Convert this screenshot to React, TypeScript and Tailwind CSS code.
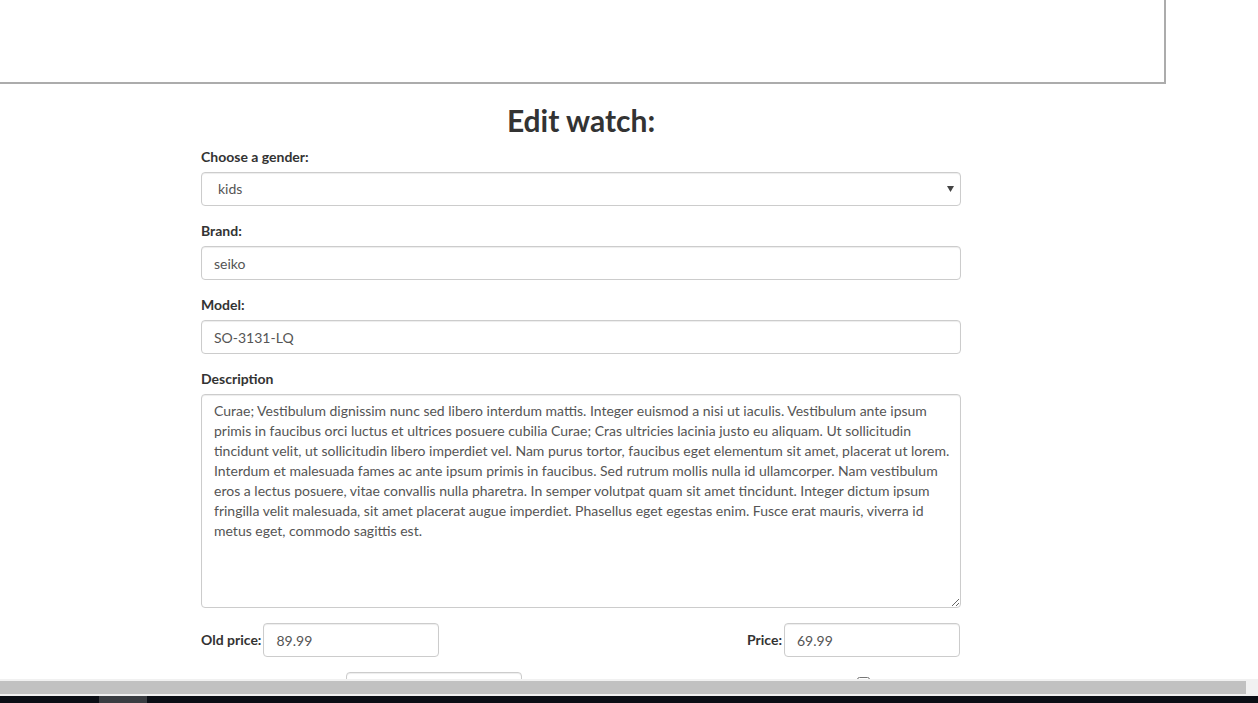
import React from "react";

const descriptionLines = [
  "Curae; Vestibulum dignissim nunc sed libero interdum mattis. Integer euismod a nisi ut iaculis. Vestibulum ante ipsum",
  "primis in faucibus orci luctus et ultrices posuere cubilia Curae; Cras ultricies lacinia justo eu aliquam. Ut sollicitudin",
  "tincidunt velit, ut sollicitudin libero imperdiet vel. Nam purus tortor, faucibus eget elementum sit amet, placerat ut lorem.",
  "Interdum et malesuada fames ac ante ipsum primis in faucibus. Sed rutrum mollis nulla id ullamcorper. Nam vestibulum",
  "eros a lectus posuere, vitae convallis nulla pharetra. In semper volutpat quam sit amet tincidunt. Integer dictum ipsum",
  "fringilla velit malesuada, sit amet placerat augue imperdiet. Phasellus eget egestas enim. Fusce erat mauris, viverra id",
  "metus eget, commodo sagittis est.",
];

const control =
  "h-[34px] rounded-[4px] border border-[#ccc] bg-white px-3 text-[14px] leading-5 text-[#555] shadow-[inset_0_1px_1px_rgba(0,0,0,0.075)] outline-none";

function Field({ label, value }: { label: string; value: string }) {
  return (
    <div className="mb-[15px] flex flex-col">
      <label className="mb-[5px] text-[14px] font-bold leading-5 text-[#333]">{label}</label>
      <input className={`${control} w-full`} defaultValue={value} readOnly />
    </div>
  );
}

export default function App() {
  return (
    <div className="flex h-[703px] w-[1258px] flex-col overflow-hidden bg-white font-['Lato','Open_Sans',sans-serif]">
      <div className="flex-1 overflow-hidden">
        <div className="h-[84px] w-[1166px] border-b-2 border-r-2 border-[#acacac]" />

        <form className="ml-[201px] w-[760px]">
          <h2 className="mb-[10px] mt-[20px] text-center text-[30px] font-bold leading-[33px] text-[#333]">
            Edit watch:
          </h2>

          <div className="mb-[15px] flex flex-col">
            <label className="mb-[5px] text-[14px] font-bold leading-5 text-[#333]">
              Choose a gender:
            </label>
            <div className="relative">
              <select
                className={`${control} w-full appearance-none pl-4`}
                defaultValue="kids"
              >
                <option value="men">men</option>
                <option value="women">women</option>
                <option value="kids">kids</option>
              </select>
              <svg
                className="pointer-events-none absolute right-[7px] top-[14px] h-[6px] w-[7px]"
                viewBox="0 0 7 6"
              >
                <path d="M0 0h7L3.5 6z" fill="#444" />
              </svg>
            </div>
          </div>

          <Field label="Brand:" value="seiko" />
          <Field label="Model:" value="SO-3131-LQ" />

          <div className="mb-[15px] flex flex-col">
            <label className="mb-[5px] text-[14px] font-bold leading-5 text-[#333]">
              Description
            </label>
            <textarea
              className="h-[214px] w-full rounded-[4px] border border-[#ccc] bg-white px-3 py-[6px] text-[14px] leading-5 text-[#555] shadow-[inset_0_1px_1px_rgba(0,0,0,0.075)] outline-none"
              wrap="off"
              readOnly
              defaultValue={descriptionLines.join("\n")}
            />
          </div>

          <div className="mb-[15px] flex items-center justify-between">
            <div className="flex items-center gap-[2px]">
              <label className="text-[14px] font-bold leading-5 text-[#333]">Old price:</label>
              <input className={`${control} w-[176px]`} defaultValue="89.99" readOnly />
            </div>
            <div className="mr-px flex items-center gap-[2px]">
              <label className="text-[14px] font-bold leading-5 text-[#333]">Price:</label>
              <input className={`${control} w-[176px]`} defaultValue="69.99" readOnly />
            </div>
          </div>

          <div className="flex items-start justify-between">
            <div className="flex items-center gap-[3px]">
              <label className="w-[142px] text-[14px] font-bold leading-5 text-[#333]">
                Quantity:
              </label>
              <input className={`${control} w-[176px]`} defaultValue="5" readOnly />
            </div>
            <label className="mr-[10px] mt-[2px] flex items-start gap-[4px] text-[14px] leading-5 text-[#777]">
              <input type="checkbox" className="mt-[3px] h-[13px] w-[13px]" />
              Smart watch
            </label>
          </div>
        </form>
      </div>

      <div className="flex h-[17px] items-center bg-[#f1f1f1]">
        <div className="h-[13px] w-[1246px] bg-[#c1c1c1]" />
      </div>
      <div className="flex h-[7px] bg-[#0b0e15]">
        <div className="ml-[99px] w-[48px] bg-[#3a3d42]" />
      </div>
    </div>
  );
}
